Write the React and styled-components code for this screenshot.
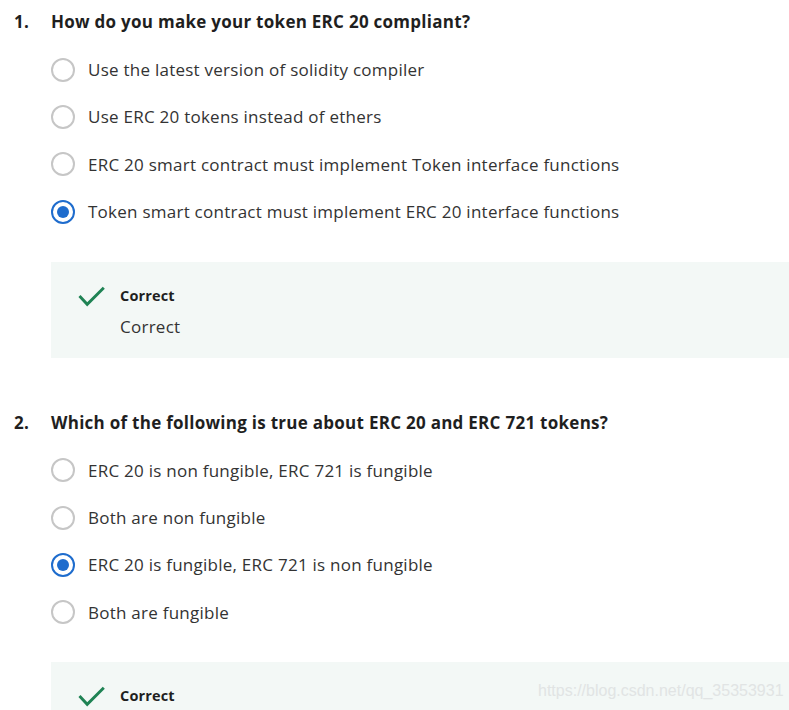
import React from 'react';
import styled, { createGlobalStyle } from 'styled-components';

const GlobalStyle = createGlobalStyle`
  body {
    margin: 0;
    background: #ffffff;
    overflow: hidden;
    font-family: 'Open Sans', 'Liberation Sans', Arial, sans-serif;
  }
`;

const Page = styled.div`
  position: relative;
  padding: 10px 0 0 14px;
`;

const Question = styled.section`
  margin-bottom: 53px;
`;

const QuestionHead = styled.div`
  display: flex;
  font-size: 17px;
  letter-spacing: 0.27px;
  font-weight: 700;
  line-height: 24px;
  color: #1f1f1f;
`;

const Number = styled.span`
  width: 37px;
  flex-shrink: 0;
`;

const Options = styled.div`
  display: flex;
  flex-direction: column;
  gap: 23.4px;
  padding: 23.5px 0 0 37px;
`;

const Option = styled.label`
  display: flex;
  align-items: center;
  gap: 13px;
  height: 24px;
  font-size: 17px;
  letter-spacing: 0.25px;
  color: #333333;
`;

const Radio = styled.span`
  box-sizing: border-box;
  width: 24px;
  height: 24px;
  border-radius: 50%;
  border: 2px solid ${(p) => (p.checked ? '#1e6ccd' : '#c6c6c6')};
  display: flex;
  align-items: center;
  justify-content: center;

  &::after {
    content: '';
    width: 12px;
    height: 12px;
    border-radius: 50%;
    background: #1e6ccd;
    display: ${(p) => (p.checked ? 'block' : 'none')};
  }
`;

const Feedback = styled.div`
  display: flex;
  gap: 15px;
  margin: 38px 0 0 37px;
  padding: 24px 0 19px 27px;
  background: #f3f8f6;
`;

const FeedbackText = styled.div`
  display: flex;
  flex-direction: column;
  gap: 9px;
`;

const FeedbackTitle = styled.div`
  font-size: 14.5px;
  letter-spacing: 0.15px;
  font-weight: 700;
  line-height: 20px;
  color: #1f1f1f;
`;

const FeedbackBody = styled.div`
  font-size: 17px;
  letter-spacing: 0.25px;
  line-height: 24px;
  color: #333333;
`;

const CheckIcon = styled.svg`
  width: 27px;
  height: 21px;
  flex-shrink: 0;
`;

const Watermark = styled.div`
  position: absolute;
  left: 538px;
  top: 682px;
  font-family: 'Liberation Sans', Arial, sans-serif;
  font-size: 16px;
  color: #e1e4e4;
`;

const Check = () => (
  <CheckIcon viewBox="0 0 27 21">
    <path d="M1.5 10 L9.2 18.3 L25.8 1.8" fill="none" stroke="#1f8354" strokeWidth="2.9" />
  </CheckIcon>
);

const questions = [
  {
    n: '1.',
    q: 'How do you make your token ERC 20 compliant?',
    options: [
      'Use the latest version of solidity compiler',
      'Use ERC 20 tokens instead of ethers',
      'ERC 20 smart contract must implement Token interface functions',
      'Token smart contract must implement ERC 20 interface functions',
    ],
    picked: 3,
  },
  {
    n: '2.',
    q: 'Which of the following is true about ERC 20 and ERC 721 tokens?',
    options: [
      'ERC 20 is non fungible, ERC 721 is fungible',
      'Both are non fungible',
      'ERC 20 is fungible, ERC 721 is non fungible',
      'Both are fungible',
    ],
    picked: 2,
  },
];

export default function App() {
  return (
    <Page>
      <GlobalStyle />
      {questions.map((item) => (
        <Question key={item.n}>
          <QuestionHead>
            <Number>{item.n}</Number>
            <span>{item.q}</span>
          </QuestionHead>
          <Options>
            {item.options.map((o, i) => (
              <Option key={o}>
                <Radio checked={i === item.picked} />
                {o}
              </Option>
            ))}
          </Options>
          <Feedback>
            <Check />
            <FeedbackText>
              <FeedbackTitle>Correct</FeedbackTitle>
              <FeedbackBody>Correct</FeedbackBody>
            </FeedbackText>
          </Feedback>
        </Question>
      ))}
      <Watermark>https://blog.csdn.net/qq_35353931</Watermark>
    </Page>
  );
}
